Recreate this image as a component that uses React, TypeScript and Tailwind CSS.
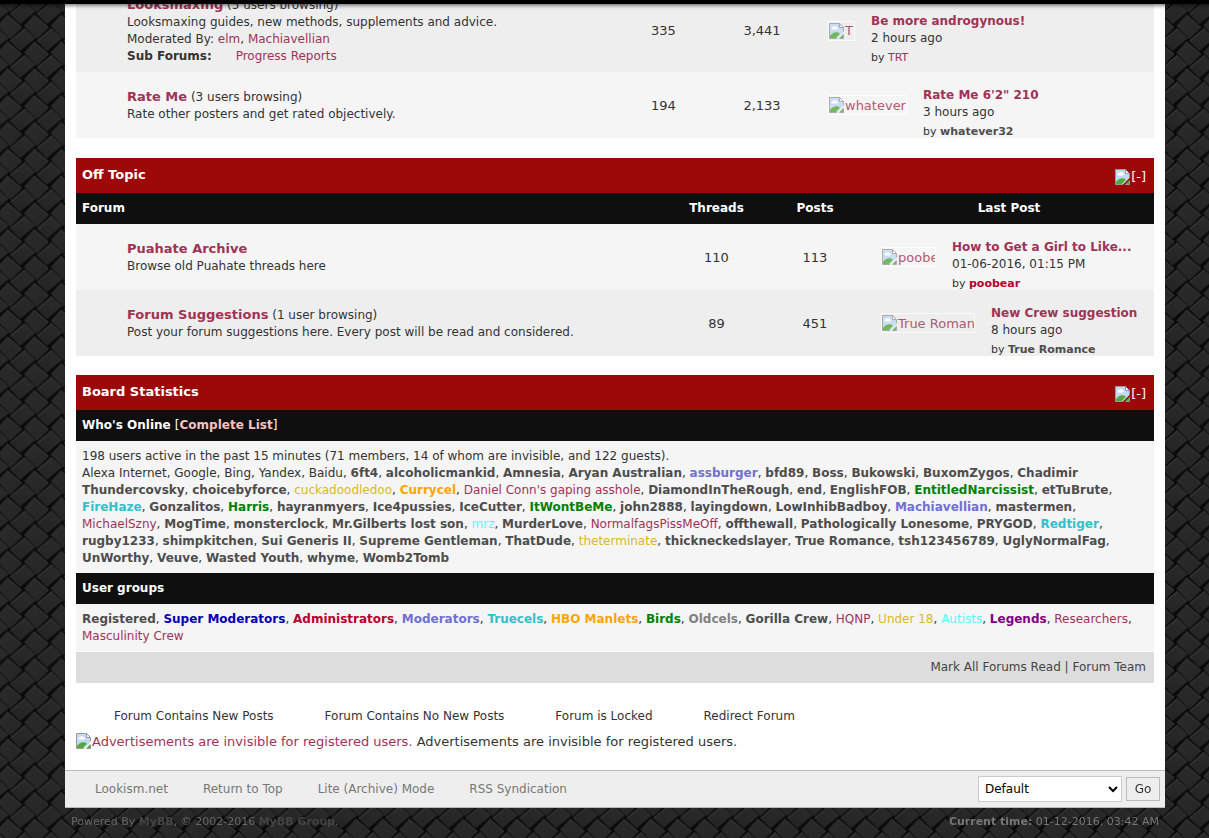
import React from 'react';

const member = 'font-bold text-[#4d4d4d]';
const plain = 'text-[#a03355]';
const mod = 'font-bold text-[#7070d4]';
const green = 'font-bold text-[#008000]';
const cyan = 'font-bold text-[#33c0cc]';
const orange = 'font-bold text-[#ffa500]';
const gold = 'text-[#dbb81d]';
const aqua = 'text-[#54ffff]';

// [name, style] - no style means a regular member
const online: string[][] = [
    ['6ft4'], ['alcoholicmankid'], ['Amnesia'], ['Aryan Australian'], ['assburger', mod], ['bfd89'], ['Boss'],
    ['Bukowski'], ['BuxomZygos'], ['Chadimir Thundercovsky'], ['choicebyforce'], ['cuckadoodledoo', gold],
    ['Currycel', orange], ["Daniel Conn's gaping asshole", plain], ['DiamondInTheRough'], ['end'], ['EnglishFOB'],
    ['EntitledNarcissist', green], ['etTuBrute'], ['FireHaze', cyan], ['Gonzalitos'], ['Harris', green],
    ['hayranmyers'], ['Ice4pussies'], ['IceCutter'], ['ItWontBeMe', green], ['john2888'], ['layingdown'],
    ['LowInhibBadboy'], ['Machiavellian', mod], ['mastermen'], ['MichaelSzny', plain], ['MogTime'],
    ['monsterclock'], ['Mr.Gilberts lost son'], ['mrz', aqua], ['MurderLove'], ['NormalfagsPissMeOff', plain],
    ['offthewall'], ['Pathologically Lonesome'], ['PRYGOD'], ['Redtiger', cyan], ['rugby1233'], ['shimpkitchen'],
    ['Sui Generis II'], ['Supreme Gentleman'], ['ThatDude'], ['theterminate', gold], ['thickneckedslayer'],
    ['True Romance'], ['tsh123456789'], ['UglyNormalFag'], ['UnWorthy'], ['Veuve'], ['Wasted Youth'], ['whyme'],
    ['Womb2Tomb'],
];

const groups: string[][] = [
    ['Registered'], ['Super Moderators', 'font-bold text-[#0000b5]'], ['Administrators', 'font-bold text-[#b8002e]'],
    ['Moderators', mod], ['Truecels', cyan], ['HBO Manlets', orange], ['Birds', green],
    ['Oldcels', 'font-bold text-[#808080]'], ['Gorilla Crew'], ['HQNP', plain], ['Under 18', gold],
    ['Autists', aqua], ['Legends', 'font-bold text-[#800080]'], ['Researchers', plain], ['Masculinity Crew', plain],
];

function Names({ list }: { list: string[][] }) {
    return (
        <>
            {list.map(([name, style], i) => (
                <React.Fragment key={name}>
                    {i > 0 && ', '}
                    <a href="#" className={style || member}>{name}</a>
                </React.Fragment>
            ))}
        </>
    );
}

function BrokenImage() {
    return (
        <svg className="inline-block w-4 h-4 shrink-0 align-top" viewBox="0 0 16 16" aria-hidden="true">
            <path d="M1 .5h9.5l4 4V9L8 15.5H.5V.5z" fill="#c3d9f7" />
            <path d="M10.500 .5v4h4z" fill="#fff" />
            <path d="M2.500 6a1.500 1.500 0 0 1 1.500-2 2 2 0 0 1 3.500 0A1.300 1.300 0 0 1 8 6.500H3z" fill="#fff" />
            <path d="M1 14.500V13c2-3 5-4.500 8-3.500l2 1-4 4.500H1z" fill="#52ab3a" />
            <path d="M14.500 11v4.500H10z" fill="#52ab3a" />
            <path d="M8 15.500H.5V.5h10l4 4V8.500M10.500 .5v4h4M10.500 15.500h4V11.500" fill="none" stroke="#9a9a9a" />
        </svg>
    );
}

function Weave() {
    return (
        <svg className="fixed inset-0 -z-10 w-full h-full" aria-hidden="true">
            <defs>
                <linearGradient id="warp" x1="0" y1="0" x2="1" y2="1">
                    <stop offset="0" stopColor="#2c2c2c" />
                    <stop offset="1" stopColor="#242424" />
                </linearGradient>
                <linearGradient id="weft" x1="0" y1="1" x2="1" y2="0">
                    <stop offset="0" stopColor="#222222" />
                    <stop offset="1" stopColor="#2c2c2c" />
                </linearGradient>
                <g id="tileA">
                    <path d="M-1-12 14 1 2 12.500-11-1z" fill="url(#warp)" />
                    <path d="M-1-11.500 13.500 1" stroke="#343434" fill="none" />
                </g>
                <g id="tileB">
                    <path d="M2-12 12.500-2-3 11-13 1z" fill="url(#weft)" />
                    <path d="M-12.500 1 2-11.500" stroke="#393939" fill="none" />
                </g>
                <pattern id="weave" width="26.8" height="26.8" x="21.6" y="13.3" patternUnits="userSpaceOnUse">
                    <rect width="27" height="27" fill="#0a0a0a" />
                    <use href="#tileB" x="1.400" y="0" />
                    <use href="#tileB" x="28.200" y="0" />
                    <use href="#tileB" x="1.400" y="26.800" />
                    <use href="#tileB" x="28.200" y="26.800" />
                    <use href="#tileA" x="13.400" y="13.400" />
                </pattern>
            </defs>
            <rect width="100%" height="100%" fill="url(#weave)" />
        </svg>
    );
}

type ForumRow = {
    name: string;
    browsing?: string;
    about: string;
    mods?: string[];
    sub?: string;
    threads: string;
    posts: string;
    alt: string;
    altWidth: string;
    title: string;
    when: string;
    by: string;
    byStyle: string;
    shade: string;
};

function Forum({ row }: { row: ForumRow }) {
    return (
        <tr className={row.shade}>
            <td className="py-[7px] pl-[51px] align-middle">
                <a href="#" className="text-[13px] font-bold text-[#a03355]">{row.name}</a> {row.browsing}
                <div>{row.about}</div>
                {row.mods && (
                    <div>
                        Moderated By: <a href="#" className={plain}>{row.mods[0]}</a>, <a href="#" className={plain}>{row.mods[1]}</a>
                    </div>
                )}
                {row.sub && (
                    <div>
                        <strong>Sub Forums:</strong> <a href="#" className="ml-5 text-[#a03355]">{row.sub}</a>
                    </div>
                )}
            </td>
            <td className="text-center text-[13px]">{row.threads}</td>
            <td className="text-center text-[13px]">{row.posts}</td>
            <td className="pl-[17px]">
                <div className="flex items-center gap-4">
                    <a href="#" className={`flex h-5 items-center overflow-hidden border border-white whitespace-nowrap text-[13px] text-[#a03355] opacity-80 ${row.altWidth}`}>
                        <BrokenImage />{row.alt}
                    </a>
                    <div className="pt-[15px] whitespace-nowrap">
                        <a href="#" className="block font-bold text-[#a03355]">{row.title}</a>
                        <div>{row.when}</div>
                        <div className="mt-[5px] text-[11px] leading-3">by <a href="#" className={row.byStyle}>{row.by}</a></div>
                    </div>
                </div>
            </td>
        </tr>
    );
}

function Collapse() {
    return (
        <button type="button" className="flex pt-1 text-[13px] leading-4 font-normal">
            <BrokenImage />[-]
        </button>
    );
}

function Title({ text }: { text: string }) {
    return (
        <div className="flex h-[35px] items-center justify-between bg-[#9d0808] pr-2 pb-[2px] pl-[6px] text-[13px] font-bold text-white">
            <h2>{text}</h2>
            <Collapse />
        </div>
    );
}

const looks: ForumRow[] = [
    {
        name: 'Looksmaxing', browsing: '(5 users browsing)', about: 'Looksmaxing guides, new methods, supplements and advice.',
        mods: ['elm', 'Machiavellian'], sub: 'Progress Reports', threads: '335', posts: '3,441', alt: 'T', altWidth: 'w-[27px]',
        title: 'Be more androgynous!', when: '2 hours ago', by: 'TRT', byStyle: plain, shade: 'bg-[#eeeeee]',
    },
    {
        name: 'Rate Me', browsing: '(3 users browsing)', about: 'Rate other posters and get rated objectively.',
        threads: '194', posts: '2,133', alt: 'whatever', altWidth: 'w-[79px]',
        title: 'Rate Me 6\'2" 210', when: '3 hours ago', by: 'whatever32', byStyle: member, shade: 'bg-[#f5f5f5]',
    },
];

const offTopic: ForumRow[] = [
    {
        name: 'Puahate Archive', about: 'Browse old Puahate threads here', threads: '110', posts: '113',
        alt: 'poobe', altWidth: 'w-[55px]', title: 'How to Get a Girl to Like...', when: '01-06-2016, 01:15 PM',
        by: 'poobear', byStyle: 'font-bold text-[#b8002e]', shade: 'bg-[#f5f5f5]',
    },
    {
        name: 'Forum Suggestions', browsing: '(1 user browsing)', about: 'Post your forum suggestions here. Every post will be read and considered.',
        threads: '89', posts: '451', alt: 'True Roman', altWidth: 'w-[94px]', title: 'New Crew suggestion', when: '8 hours ago',
        by: 'True Romance', byStyle: member, shade: 'bg-[#eeeeee]',
    },
];

function App() {
    return (
        <div className="relative isolate min-h-screen overflow-hidden bg-[#151515] pr-11 pl-[65px] font-['DejaVu_Sans',Verdana,sans-serif] text-[12px] leading-[17px] text-[#333]">
            <Weave />
            <header className="fixed inset-x-0 top-0 z-10 h-1 bg-black shadow-[0_1px_4px_rgba(0,0,0,0.7)]" />

            <main className="-mt-[11px] bg-white px-[11px] pb-5">
                <table className="mb-5 w-full table-fixed">
                    <colgroup>
                        <col />
                        <col className="w-[99px]" />
                        <col className="w-[98px]" />
                        <col className="w-[343px]" />
                    </colgroup>
                    <tbody>{looks.map((row) => <Forum key={row.name} row={row} />)}</tbody>
                </table>

                <Title text="Off Topic" />
                <table className="mb-[19px] w-full table-fixed">
                    <colgroup>
                        <col />
                        <col className="w-[99px]" />
                        <col className="w-[98px]" />
                        <col className="w-[290px]" />
                    </colgroup>
                    <thead>
                        <tr className="h-[31px] bg-[#0f0f0f] text-white">
                            <th className="pl-[6px] text-left">Forum</th>
                            <th>Threads</th>
                            <th>Posts</th>
                            <th>Last Post</th>
                        </tr>
                    </thead>
                    <tbody>{offTopic.map((row) => <Forum key={row.name} row={row} />)}</tbody>
                </table>

                <Title text="Board Statistics" />
                <h3 className="bg-[#0f0f0f] px-[6px] py-[7px] font-bold text-white">
                    Who's Online <span className="font-normal">[</span><a href="#" className="text-[#ffc0c0]">Complete List</a><span className="font-normal">]</span>
                </h3>
                <div className="bg-[#f5f5f5] px-[6px] pt-[7px] pb-[6px]">
                    198 users active in the past 15 minutes (71 members, 14 of whom are invisible, and 122 guests).<br />
                    Alexa Internet, Google, Bing, Yandex, Baidu, <Names list={online} />
                </div>
                <h3 className="bg-[#0f0f0f] px-[6px] py-[7px] font-bold text-white">User groups</h3>
                <div className="bg-[#f5f5f5] px-[6px] pt-[7px] pb-[6px]">
                    <Names list={groups} />
                </div>
                <div className="mt-px bg-[#dddddd] px-2 py-[7px] text-right text-[#444]">
                    <a href="#">Mark All Forums Read</a> | <a href="#">Forum Team</a>
                </div>

                <ul className="mt-[25px] flex gap-[51px] pl-[38px]">
                    <li>Forum Contains New Posts</li>
                    <li>Forum Contains No New Posts</li>
                    <li>Forum is Locked</li>
                    <li>Redirect Forum</li>
                </ul>
                <p className="mt-2 text-[13px]">
                    <a href="#" className={plain}><BrokenImage />Advertisements are invisible for registered users.</a> Advertisements are invisible for registered users.
                </p>
            </main>

            <footer>
                <div className="flex h-[38px] items-center justify-between border-y border-[#bbb] bg-[#eeeeee] pr-[5px] pl-[30px] text-[#777]">
                    <nav className="flex gap-[35px]">
                        <a href="#">Lookism.net</a>
                        <a href="#">Return to Top</a>
                        <a href="#">Lite (Archive) Mode</a>
                        <a href="#">RSS Syndication</a>
                    </nav>
                    <form className="flex items-center gap-1">
                        <select aria-label="Theme" className="h-[26px] w-36 border border-[#ccc] bg-white pl-[2px] text-black">
                            <option>Default</option>
                        </select>
                        <button type="button" className="h-6 w-[34px] border border-[#bbb] bg-[#eee] text-[#333]">Go</button>
                    </form>
                </div>
                <div className="flex justify-between px-[6px] py-[5px] text-[11px] text-[#666]">
                    <span>Powered By <a href="#" className="font-bold text-[#444]">MyBB</a>, © 2002-2016 <a href="#" className="font-bold text-[#444]">MyBB Group</a>.</span>
                    <span className="text-[#777]"><strong>Current time:</strong> 01-12-2016, 03:42 AM</span>
                </div>
            </footer>
        </div>
    );
}

export default App;
